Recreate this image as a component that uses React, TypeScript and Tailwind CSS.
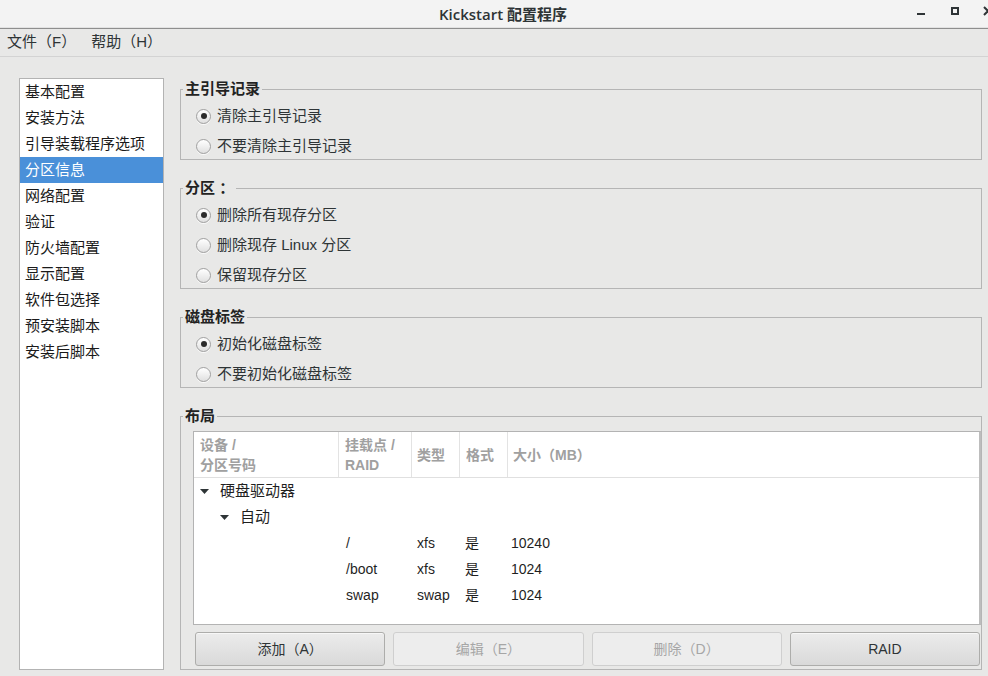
import React from "react";

const FONT = { fontFamily: "'Liberation Sans', 'Noto Sans CJK SC', sans-serif" };

function Radio({ checked, label }: { checked?: boolean; label: string }) {
  return (
    <div className="flex h-[26px] items-center pl-[15px]">
      <span className="flex h-[15px] w-[15px] items-center justify-center rounded-full border border-[#a0a0a0] bg-linear-to-b from-white to-[#e0e0e0] shadow-[0_1px_0_rgba(255,255,255,0.8)]">
        {checked && <span className="h-[6px] w-[6px] rounded-full bg-[#2b2b2b]" />}
      </span>
      <span className="ml-[6px] text-[15px] leading-[18px] text-[#2e3436]">{label}</span>
    </div>
  );
}

function Frame({ title, children, className = "" }: { title: string; children: React.ReactNode; className?: string }) {
  return (
    <fieldset className={`border border-[#b5b5b5] ${className}`}>
      <legend className="ml-[2px] px-[2px] text-[15px] font-bold leading-[18px] text-[#222]">{title}</legend>
      {children}
    </fieldset>
  );
}

function Tri() {
  return (
    <svg width="9" height="5" viewBox="0 0 9 5" className="shrink-0">
      <path d="M0 0 H9 L4.5 5 Z" fill="#2e3436" />
    </svg>
  );
}

function Btn({ label, disabled }: { label: string; disabled?: boolean }) {
  return disabled ? (
    <div className="flex h-[34px] items-center justify-center rounded-[3px] border border-[#cfcfcf] bg-[#ededed] text-[14px] text-[#a6a6a6]">
      {label}
    </div>
  ) : (
    <div className="flex h-[34px] items-center justify-center rounded-[3px] border border-[#adadab] bg-linear-to-b from-[#ececec] to-[#d9d9d9] text-[14px] text-[#2e3436] shadow-[inset_0_1px_0_rgba(255,255,255,0.6)]">
      {label}
    </div>
  );
}

const rows = [
  { mp: "/", type: "xfs", fmt: "是", size: "10240" },
  { mp: "/boot", type: "xfs", fmt: "是", size: "1024" },
  { mp: "swap", type: "swap", fmt: "是", size: "1024" },
];

const navItems = [
  "基本配置",
  "安装方法",
  "引导装载程序选项",
  "分区信息",
  "网络配置",
  "验证",
  "防火墙配置",
  "显示配置",
  "软件包选择",
  "预安装脚本",
  "安装后脚本",
];

export default function App() {
  return (
    <div className="flex h-[676px] w-[988px] flex-col overflow-hidden bg-[#e8e8e7]" style={FONT}>
      {/* Title bar */}
      <div className="relative flex h-[29px] shrink-0 items-center justify-center border-b border-[#8e8e8e] bg-[#f3f3f3] shadow-[inset_0_-1px_0_#e2e2e2]">
        <span className="pl-[18px] text-[15px] leading-[18px] text-[#2e3436]" style={{ fontFamily: "'Open Sans', 'Noto Sans CJK SC', sans-serif", fontWeight: 600 }}>
          Kickstart 配置程序
        </span>
        <div className="absolute left-[917px] top-[13px] h-[2px] w-[8px] bg-[#2e3436]" />
        <div className="absolute left-[951px] top-[7px] h-[8px] w-[8px] border-2 border-[#2e3436]" />
        <svg className="absolute left-[983px] top-[6px]" width="10" height="10" viewBox="0 0 10 10">
          <path d="M1 1 L9 9 M9 1 L1 9" stroke="#2e3436" strokeWidth="2" />
        </svg>
      </div>

      {/* Menu bar */}
      <div className="flex h-[28px] shrink-0 items-center gap-[15px] border-b border-[#d3d3d3] pl-[7px] text-[15px] text-[#2e3436]">
        <span>文件（F）</span>
        <span>帮助（H）</span>
      </div>

      {/* Main */}
      <div className="flex min-h-0 flex-1 pl-[19px] pt-[21px] pb-[6px] pr-[6px]">
        {/* Side list */}
        <div className="flex w-[145px] shrink-0 flex-col border border-[#b3b3b3] bg-white">
          {navItems.map((t, i) => (
            <div
              key={t}
              className={`flex h-[26px] items-center pl-[5px] text-[15px] ${i === 3 ? "bg-[#4a90d9] text-white" : "text-[#1a1a1a]"}`}
            >
              {t}
            </div>
          ))}
        </div>

        {/* Right column */}
        <div className="ml-[16px] flex min-w-0 flex-1 flex-col gap-[19px] pt-[2px]">
          <Frame title="主引导记录">
            <div className="flex flex-col gap-[4px] pt-[5px]">
              <Radio checked label="清除主引导记录" />
              <Radio label="不要清除主引导记录" />
            </div>
          </Frame>

          <Frame title="分区 ：">
            <div className="flex flex-col gap-[4px] pt-[5px]">
              <Radio checked label="删除所有现存分区" />
              <Radio label="删除现存  Linux 分区" />
              <Radio label="保留现存分区" />
            </div>
          </Frame>

          <Frame title="磁盘标签">
            <div className="flex flex-col gap-[4px] pt-[5px]">
              <Radio checked label="初始化磁盘标签" />
              <Radio label="不要初始化磁盘标签" />
            </div>
          </Frame>

          <Frame title="布局" className="min-h-0 flex-1">
            <div className="flex h-full flex-col pb-[1px]">
              {/* Tree view */}
              <div className="ml-[12px] mt-[6px] h-[194px] border border-[#b3b3b3] border-r-[2px] border-r-[#bdbdbd] bg-white">
                <div className="grid h-[46px] grid-cols-[145px_73px_48px_48px_1fr] border-b border-[#e0e0e0] text-[14px] font-bold leading-[20px] text-[#a0a0a0]">
                  <div className="flex flex-col justify-center border-r border-[#e3e3e3] pl-[6px]">
                    <span>设备 /</span>
                    <span>分区号码</span>
                  </div>
                  <div className="flex flex-col justify-center border-r border-[#e3e3e3] pl-[6px]">
                    <span>挂载点 /</span>
                    <span>RAID</span>
                  </div>
                  <div className="flex items-center border-r border-[#e3e3e3] pl-[5px]">类型</div>
                  <div className="flex items-center border-r border-[#e3e3e3] pl-[6px]">格式</div>
                  <div className="flex items-center pl-[5px]">大小（MB）</div>
                </div>
                <div className="text-[14px] text-[#1f1f1f]">
                  <div className="flex h-[26px] items-center pl-[6px]">
                    <Tri />
                    <span className="ml-[11px] text-[15px]">硬盘驱动器</span>
                  </div>
                  <div className="flex h-[26px] items-center pl-[26px]">
                    <Tri />
                    <span className="ml-[11px] text-[15px]">自动</span>
                  </div>
                  {rows.map((r) => (
                    <div key={r.mp} className="grid h-[26px] grid-cols-[145px_73px_48px_48px_1fr] items-center">
                      <div />
                      <div className="pl-[7px]">{r.mp}</div>
                      <div className="pl-[5px]">{r.type}</div>
                      <div className="pl-[5px]">{r.fmt}</div>
                      <div className="pl-[3px]">{r.size}</div>
                    </div>
                  ))}
                </div>
              </div>

              {/* Buttons */}
              <div className="ml-[14px] mr-[1px] mt-[7px] grid grid-cols-4 gap-[8px]">
                <Btn label="添加（A）" />
                <Btn label="编辑（E）" disabled />
                <Btn label="删除（D）" disabled />
                <Btn label="RAID" />
              </div>
            </div>
          </Frame>
        </div>
      </div>
    </div>
  );
}
